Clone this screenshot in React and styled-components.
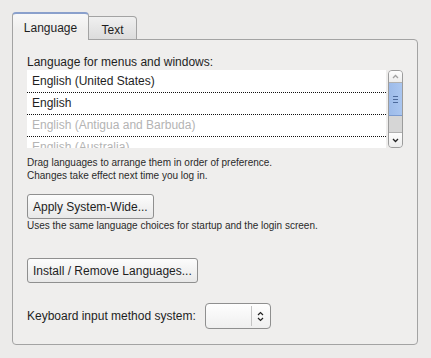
import React from 'react';
import styled, { createGlobalStyle } from 'styled-components';

const GlobalStyle = createGlobalStyle`
  body {
    margin: 0;
    background: #ecebea;
    font-family: "Liberation Sans", Arial, sans-serif;
    font-size: 12px;
    color: #1e1e1e;
  }
`;

const Root = styled.div`
  padding: 12px 0 0 12px;
  width: 406px;
`;

const TabBar = styled.div`
  display: flex;
  align-items: flex-end;
  height: 28px;
  margin-bottom: -1px;
  position: relative;
  z-index: 1;
`;

const Tab = styled.div`
  box-sizing: border-box;
  display: flex;
  align-items: center;
  justify-content: center;
  border: 1px solid #a3a3a3;
  border-radius: 4px 4px 0 0;
  ${(p) =>
    p.active
      ? `
    width: 77px;
    height: 28px;
    border-top: 2px solid #8aa0cc;
    border-bottom: none;
    background: linear-gradient(#f8f8f8, #efeeed 60%);
    padding-top: 1px;
  `
      : `
    width: 48px;
    height: 24px;
    border-left: none;
    border-radius: 0 4px 0 0;
    background: linear-gradient(#f0f0f0, #dcdcdc);
    padding-top: 4px;
  `}
`;

const Panel = styled.div`
  box-sizing: border-box;
  width: 406px;
  border: 1px solid #a3a3a3;
  border-radius: 0 4px 4px 4px;
  background: #efeeed;
  padding: 14px 14px 15px 14px;
`;

const Label = styled.div`
  line-height: 16px;
  height: 16px;
`;

const ListArea = styled.div`
  display: flex;
  gap: 2px;
  height: 78px;
`;

const List = styled.div`
  flex: 1;
  background: #fff;
  overflow: hidden;
  padding-top: 1px;
`;

const Row = styled.div`
  box-sizing: border-box;
  height: 22px;
  line-height: 21px;
  padding-left: 5px;
  border-bottom: 1px dotted #111;
  color: ${(p) => (p.disabled ? '#b4b4b4' : '#1e1e1e')};
  white-space: nowrap;
`;

const Scrollbar = styled.div`
  box-sizing: border-box;
  width: 15px;
  border: 1px solid #9c9c9c;
  border-radius: 4px;
  background: #d6d6d6;
  display: flex;
  flex-direction: column;
  overflow: hidden;
`;

const ScrollButton = styled.div`
  height: ${(p) => p.h}px;
  display: flex;
  align-items: center;
  justify-content: center;
  background: linear-gradient(#fdfdfd, #ececec);
  border-${(p) => (p.top ? 'bottom' : 'top')}: 1px solid #b0b0b0;
`;

const Thumb = styled.div`
  height: 32px;
  background: linear-gradient(90deg, #9dbbe9, #aac6f0);
  border-bottom: 1px solid #7c9bd0;
  display: flex;
  flex-direction: column;
  align-items: center;
  justify-content: center;
  gap: 2px;
`;

const Grip = styled.span`
  display: block;
  width: 5px;
  height: 1px;
  background: #4d6a9c;
`;

const Track = styled.div`
  flex: 1;
`;

const Hint = styled.div`
  font-size: 10px;
  line-height: 13px;
  color: #2a2a2a;
  margin-top: ${(p) => p.mt || 0}px;
`;

const Button = styled.button`
  display: block;
  box-sizing: border-box;
  height: 25px;
  padding: 0 5px;
  margin-top: ${(p) => p.mt || 0}px;
  border: 1px solid #8f8f8f;
  border-radius: 3px;
  background: linear-gradient(#fcfcfc, #e8e8e8);
  font-family: "Liberation Sans", Arial, sans-serif;
  font-size: 12px;
  color: #1e1e1e;
`;

const InputRow = styled.div`
  display: flex;
  align-items: center;
  gap: 9px;
  margin-top: 20px;
`;

const Combo = styled.div`
  box-sizing: border-box;
  width: 66px;
  height: 26px;
  border: 1px solid #8f8f8f;
  border-radius: 4px;
  background: linear-gradient(#fefefe, #efefef);
  display: flex;
`;

const ComboValue = styled.div`
  width: 45px;
  border-right: 1px solid #c4c4c4;
  margin: 2px 0;
`;

const ComboArrow = styled.div`
  flex: 1;
  display: flex;
  align-items: center;
  justify-content: center;
`;

const Chevron = ({ up, color }) => (
  <svg width="7" height="5" viewBox="0 0 7 5">
    <path
      d={up ? 'M1 4 L3.5 1.5 L6 4' : 'M1 1 L3.5 3.5 L6 1'}
      fill="none"
      stroke={color}
      strokeWidth="1.3"
    />
  </svg>
);

const UpDown = () => (
  <svg width="7" height="11" viewBox="0 0 7 11">
    <path d="M1 4 L3.5 1.5 L6 4 M1 7 L3.5 9.5 L6 7" fill="none" stroke="#222" strokeWidth="1.2" />
  </svg>
);

const languages = [
  { name: 'English (United States)' },
  { name: 'English' },
  { name: 'English (Antigua and Barbuda)', disabled: true },
  { name: 'English (Australia)', disabled: true },
];

const App = () => {
  return (
    <Root>
      <GlobalStyle />
      <TabBar>
        <Tab active>Language</Tab>
        <Tab>Text</Tab>
      </TabBar>
      <Panel>
        <Label>Language for menus and windows:</Label>
        <ListArea>
          <List>
            {languages.map((l) => (
              <Row key={l.name} disabled={l.disabled}>
                {l.name}
              </Row>
            ))}
          </List>
          <Scrollbar>
            <ScrollButton h={11} top>
              <Chevron up color="#a0a0a0" />
            </ScrollButton>
            <Thumb>
              <Grip />
              <Grip />
              <Grip />
            </Thumb>
            <Track />
            <ScrollButton h={14}>
              <Chevron color="#222" />
            </ScrollButton>
          </Scrollbar>
        </ListArea>
        <Hint mt={8}>
          Drag languages to arrange them in order of preference.
          <br />
          Changes take effect next time you log in.
        </Hint>
        <Button mt={12}>Apply System-Wide...</Button>
        <Hint>Uses the same language choices for startup and the login screen.</Hint>
        <Button mt={26}>Install / Remove Languages...</Button>
        <InputRow>
          <span>Keyboard input method system:</span>
          <Combo>
            <ComboValue />
            <ComboArrow>
              <UpDown />
            </ComboArrow>
          </Combo>
        </InputRow>
      </Panel>
    </Root>
  );
};

export default App;
